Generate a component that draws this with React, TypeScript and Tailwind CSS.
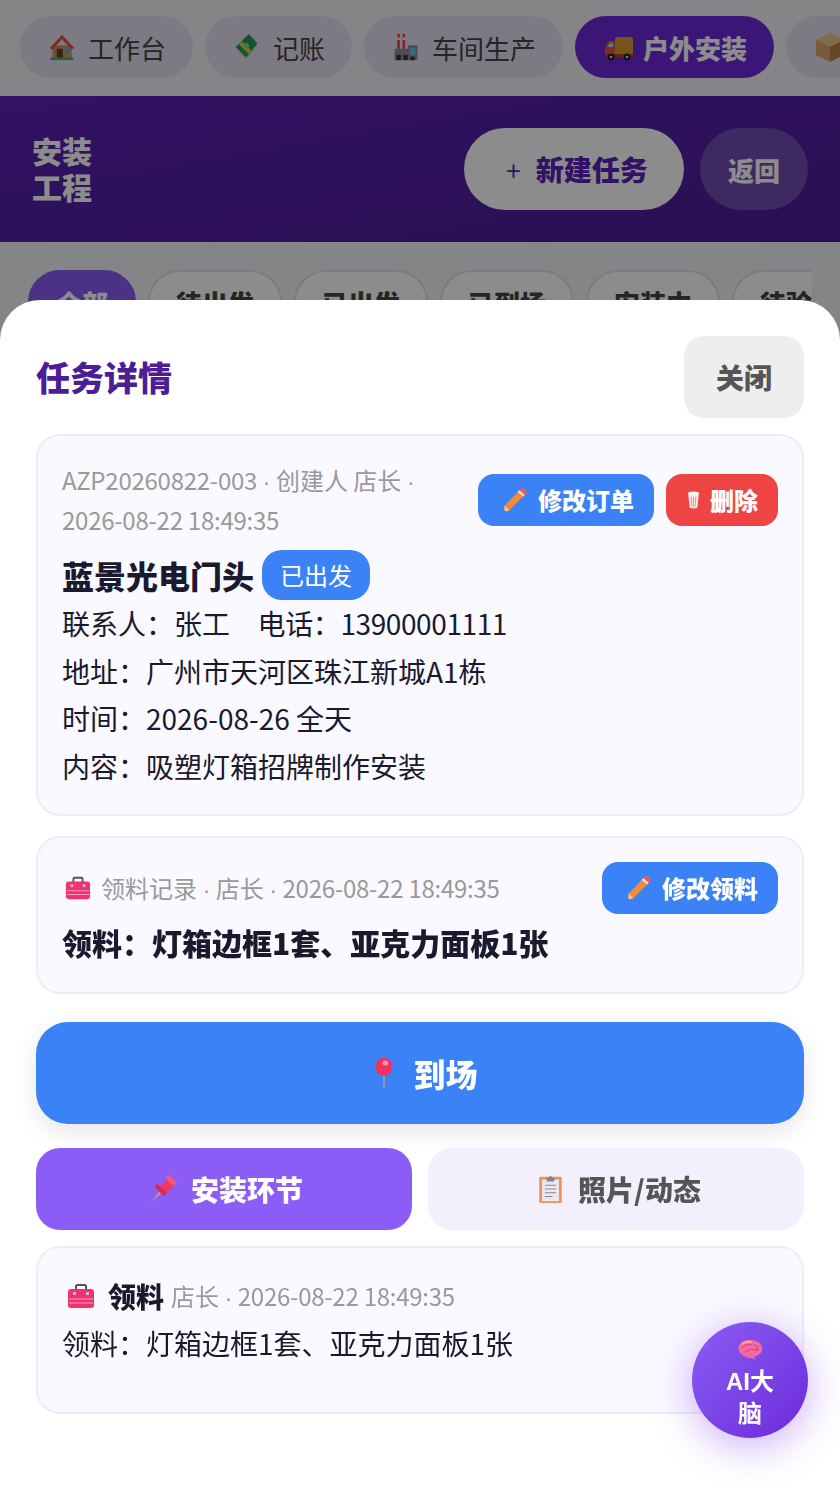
// App.tsx
import type { ReactNode } from "react";

function HouseIcon() {
  return (
    <svg viewBox="0 0 32 32" className="w-7 h-8">
      <rect x="5" y="14" width="22" height="15" fill="#c9976b" />
      <path d="M16 2 L30 17 L27 19 L16 7 L5 19 L2 17 Z" fill="#e2553d" />
      <rect x="10" y="18" width="7" height="11" fill="#6b3f2a" />
      <rect x="20" y="17" width="5" height="6" fill="#5bb0e0" />
      <rect x="3" y="28" width="26" height="3" fill="#4caf50" />
    </svg>
  );
}

function MoneyIcon() {
  return (
    <svg viewBox="0 0 32 32" className="w-7 h-8">
      <path d="M6 22 L16 31 L27 14 L17 4 Z" fill="#cfd3d6" />
      <path d="M3 16 L18 1 L28 12 L15 28 Z" fill="#1f9d4d" />
      <path d="M10 9 L21 20 L18 24 L7 13 Z" fill="#e9c64a" />
      <circle cx="15.500" cy="14.500" r="3" fill="#7bd88f" />
    </svg>
  );
}

function FactoryIcon() {
  return (
    <svg viewBox="0 0 32 32" className="w-7 h-8">
      <rect x="6" y="1" width="3" height="18" fill="#e5484d" />
      <rect x="12" y="1" width="3" height="18" fill="#e5484d" />
      <rect x="6" y="5" width="3" height="3" fill="#eee" />
      <rect x="12" y="5" width="3" height="3" fill="#eee" />
      <path d="M3 18 H18 V14 H29 V31 H3 Z" fill="#8a8a94" />
      <rect x="20" y="17" width="7" height="8" fill="#63c6e8" />
      <rect x="5" y="25" width="5" height="6" fill="#333" />
      <rect x="13" y="25" width="5" height="6" fill="#333" />
      <rect x="21" y="27" width="5" height="4" fill="#333" />
    </svg>
  );
}

function TruckIcon() {
  return (
    <svg viewBox="0 0 32 32" className="w-8 h-8">
      <rect x="12" y="6" width="18" height="18" rx="2" fill="#d99a2b" />
      <path d="M2 16 L6 10 H12 V24 H2 Z" fill="#e5533d" />
      <path d="M4 16 L7 12 H10 V16 Z" fill="#9fdcf5" />
      <rect x="2" y="23" width="28" height="3" fill="#b5402d" />
      <circle cx="8" cy="26" r="3.500" fill="#222" />
      <circle cx="24" cy="26" r="3.500" fill="#222" />
      <circle cx="8" cy="26" r="1.300" fill="#ddd" />
      <circle cx="24" cy="26" r="1.300" fill="#ddd" />
    </svg>
  );
}

function BoxIcon() {
  return (
    <svg viewBox="0 0 32 32" className="w-8 h-8">
      <path d="M16 2 L30 9 V24 L16 31 Z" fill="#b9824a" />
      <path d="M16 2 L2 9 V24 L16 31 Z" fill="#d8a46c" />
      <path d="M2 9 L16 16 L30 9 L16 2 Z" fill="#ecc28e" />
    </svg>
  );
}

function PencilIcon() {
  return (
    <svg viewBox="0 0 28 28" className="ml-1 w-[26px] h-[26px] shrink-0">
      <path d="M3 20 L18 4 L24 9 L8 25 L2 27 Z" fill="#f08a3c" />
      <path d="M18 4 L20.500 1.500 Q22 0.500 23.500 1.500 L26 4 Q27 5.500 26 7 L24 9 Z" fill="#ef5b4c" />
      <path d="M16.800 5.300 L18.600 3.400 L24.600 8.400 L22.800 10.200 Z" fill="#f3d9d9" />
      <path d="M3 20 L8 25 L2 27 Z" fill="#e9c49a" />
      <path d="M2.400 25 L4 26.500 L1.800 27.300 Z" fill="#7a4a8a" />
    </svg>
  );
}

function TrashIcon() {
  return (
    <svg viewBox="0 0 20 28" className="ml-px w-[13px] h-[22px] shrink-0">
      <ellipse cx="10" cy="4" rx="9" ry="3" fill="#fff" />
      <path d="M2 6 H18 L16 26 Q10 28 4 26 Z" fill="#fde5e5" />
      <path d="M6.500 9 L7.500 24 M10 9 V24 M13.500 9 L12.500 24" stroke="#ef8a8a" strokeWidth="1.300" />
    </svg>
  );
}

function ToolboxIcon({ size }: { size: string }) {
  return (
    <svg viewBox="0 0 28 28" className={size}>
      <path d="M9 8 V4.500 Q9 3 10.500 3 H17.500 Q19 3 19 4.500 V8" fill="none" stroke="#5b4a72" strokeWidth="2" />
      <rect x="1" y="7" width="26" height="19" rx="3" fill="#f0326e" />
      <rect x="6" y="10" width="3" height="3" fill="#c9b6d6" />
      <rect x="19" y="10" width="3" height="3" fill="#c9b6d6" />
      <path d="M2 17 H26 M2 21 H26" stroke="#f7a0bd" strokeWidth="1.200" />
    </svg>
  );
}

function RoundPin() {
  return (
    <svg viewBox="0 0 24 36" className="ml-3 w-5 h-[31px] shrink-0">
      <rect x="11" y="16" width="2" height="19" fill="#a0a0aa" />
      <ellipse cx="12" cy="10" rx="10" ry="11" fill="#f2315f" />
      <ellipse cx="13.500" cy="5.500" rx="3.500" ry="3" fill="#ff9eb5" />
    </svg>
  );
}

function PushPin() {
  return (
    <svg viewBox="0 0 30 30" className="ml-[5px] w-7 h-7 shrink-0">
      <path d="M1 29 L11 17 L13 19 Z" fill="#a5a5a0" />
      <path d="M8 14 L20 4 L26 10 L16 22 Z" fill="#ee3a5f" />
      <rect x="16.500" y="3.500" width="13" height="5" rx="2" transform="rotate(45 23 6)" fill="#f7587a" />
      <rect x="4" y="14" width="15" height="4.500" rx="2" transform="rotate(45 11.500 16)" fill="#d62a52" />
    </svg>
  );
}

function ClipboardIcon() {
  return (
    <svg viewBox="0 0 26 32" className="ml-[7px] w-[25px] h-[30px] shrink-0">
      <rect x="1" y="3" width="24" height="28" rx="1.500" fill="#e8965a" />
      <rect x="4" y="6" width="18" height="23" fill="#ece8f2" />
      <path d="M7 12 H19 M7 16 H19 M7 20 H19 M7 24 H15" stroke="#8a8790" strokeWidth="1.200" />
      <path d="M9 8 V4 H11 Q13 0 15 4 H17 V8 Z" fill="#85828c" />
    </svg>
  );
}

function BrainIcon() {
  return (
    <svg viewBox="0 0 26 22" className="w-[26px] h-[22px]">
      <path d="M3 14 Q-1 8 4 4 Q8 0 14 1 Q22 1 25 8 Q26 14 21 16 Q19 18 17 17 L18 21 L15 19 Q9 20 3 14 Z" fill="#f06ba0" />
      <path d="M5 8 Q10 4 15 6 M8 13 Q13 9 20 11 M17 5 Q21 7 21 12" fill="none" stroke="#d63f82" strokeWidth="1" />
      <path d="M5 5 Q10 2 15 3" fill="none" stroke="#f9a78e" strokeWidth="2" />
    </svg>
  );
}

// the middle dot in the reference is the narrow latin one
function Dot() {
  return <span className="leading-none font-['Liberation_Sans',sans-serif]">·</span>;
}

function Stamp({ children }: { children: ReactNode }) {
  return <span className="tracking-[-0.25px]">{children}</span>;
}

const navItems: { icon: ReactNode; label: string; active?: boolean }[] = [
  { icon: <HouseIcon />, label: "工作台" },
  { icon: <MoneyIcon />, label: "记账" },
  { icon: <FactoryIcon />, label: "车间生产" },
  { icon: <TruckIcon />, label: "户外安装", active: true },
  { icon: <BoxIcon />, label: "仓库管理" },
];

const filters = ["全部", "待出发", "已出发", "已到场", "安装中", "待验收"];

function SmallButton({ color, children }: { color: string; children: ReactNode }) {
  return (
    <button className={`h-[52px] shrink-0 rounded-2xl px-5 flex items-center gap-2.5 text-2xl font-black text-white ${color}`}>
      {children}
    </button>
  );
}

export default function App() {
  return (
    <div className="relative h-[1494px] w-[840px] overflow-hidden bg-[#f3f2f6] font-['Noto_Sans_CJK_SC',sans-serif]">
      <nav className="h-[96px] pt-4 pl-5 flex gap-3 overflow-hidden">
        {navItems.map((item) => (
          <div
            key={item.label}
            className={`h-[62px] shrink-0 rounded-full pl-7 pr-[27px] flex items-center text-[26px] ${
              item.active ? "bg-[#6d28d9] text-white font-black" : "bg-[#e4dff0] text-[#444]"
            }`}
          >
            <span className="w-10 shrink-0">{item.icon}</span>
            {item.label}
          </div>
        ))}
      </nav>

      <header className="h-[146px] px-8 flex items-center justify-between bg-gradient-to-br from-[#5b21b6] to-[#4c1d95]">
        <h1 className="-mt-0.5 w-[60px] text-[30px] leading-9 font-black text-white">安装工程</h1>
        <div className="flex gap-4">
          <button className="h-[82px] w-[220px] rounded-full bg-white flex items-center justify-center gap-[15px] text-[#5b21b6] text-[28px] font-black">
            <span className="ml-1.5 font-normal text-[26px]">+</span>
            新建任务
          </button>
          <button className="h-[82px] w-[108px] rounded-full bg-white/20 text-white text-[26px] font-black">返回</button>
        </div>
      </header>

      <div className="mt-7 ml-7 w-[784px] flex gap-3 overflow-hidden">
        {filters.map((f, i) => (
          <div
            key={f}
            className={`h-16 shrink-0 rounded-full px-[26px] border-2 flex items-center text-[26px] font-black ${
              i === 0 ? "bg-[#8b5cf6] border-[#8b5cf6] text-white" : "bg-white border-[#e2def0] text-[#444]"
            }`}
          >
            {f}
          </div>
        ))}
      </div>

      {/* modal */}
      <div className="fixed inset-0 bg-black/45 flex items-end">
        <div className="w-full h-[1194px] rounded-t-[40px] bg-white px-9 pt-9 flex flex-col">
          <div className="flex items-center justify-between mb-4">
            <h2 className="-mt-0.5 text-[34px] font-black text-[#4c1d95]">任务详情</h2>
            <button className="h-[82px] w-[120px] rounded-[20px] bg-[#eeeeee] text-[28px] font-black text-[#555]">关闭</button>
          </div>

          <section className="rounded-3xl border-2 border-[#eeecf8] bg-[#faf9ff] p-6">
            <div className="flex items-center justify-between gap-3">
              <p className="flex-1 min-w-0 text-2xl leading-10 text-[#999]">
                <Stamp>AZP20260822-003</Stamp> <Dot /> 创建人 店长 <Dot /> <Stamp>2026-08-22 18:49:35</Stamp>
              </p>
              <div className="flex gap-3">
                <SmallButton color="bg-[#3b82f6]">
                  <PencilIcon />
                  修改订单
                </SmallButton>
                <SmallButton color="bg-[#ef4444]">
                  <TrashIcon />
                  删除
                </SmallButton>
              </div>
            </div>
            <div className="mt-2.5 flex items-center gap-2 h-[50px]">
              <span className="text-[32px] font-black text-[#1a1a2e]">蓝景光电门头</span>
              <span className="h-[50px] px-[18px] rounded-[20px] bg-[#3b82f6] text-2xl leading-[50px] text-white">已出发</span>
            </div>
            <div className="text-[28px] leading-[1.7] text-[#1a1a2e]">
              <p>
                联系人：张工<span className="tracking-[-0.4px]">　电话：13900001111</span>
              </p>
              <p>地址：广州市天河区珠江新城A1栋</p>
              <p>时间：2026-08-26 全天</p>
              <p>内容：吸塑灯箱招牌制作安装</p>
            </div>
          </section>

          <section className="mt-5 rounded-3xl border-2 border-[#eeecf8] bg-[#faf9ff] p-6">
            <div className="flex items-center justify-between">
              <p className="flex items-center text-2xl text-[#999]">
                <ToolboxIcon size="ml-[3px] mr-2.5 w-[26px] h-[26px] shrink-0" />
                <span>
                  领料记录 <Dot /> 店长 <Dot /> <Stamp>2026-08-22 18:49:35</Stamp>
                </span>
              </p>
              <SmallButton color="bg-[#3b82f6]">
                <PencilIcon />
                修改领料
              </SmallButton>
            </div>
            <p className="mt-1 mb-0.5 text-[30px] leading-[48px] font-black text-[#1a1a2e]">领料：灯箱边框1套、亚克力面板1张</p>
          </section>

          <button className="mt-7 h-[102px] shrink-0 rounded-[32px] bg-[#3b82f6] flex items-center justify-center gap-[19px] text-[32px] font-black text-white shadow-[0_8px_24px_rgba(0,0,0,0.1)]">
            <RoundPin />
            到场
          </button>

          <div className="mt-6 grid grid-cols-2 gap-4">
            <button className="h-[82px] rounded-3xl bg-[#8b5cf6] flex items-center justify-center gap-[13px] text-[28px] font-black text-white">
              <PushPin />
              安装环节
            </button>
            <button className="h-[82px] rounded-3xl bg-[#f3effc] flex items-center justify-center gap-[15px] text-[28px] font-black text-[#555]">
              <ClipboardIcon />
              照片/动态
            </button>
          </div>

          <section className="mt-4 h-[168px] rounded-3xl border-2 border-[#eeecf8] bg-[#faf9ff] p-6">
            <div className="flex items-center h-12">
              <ToolboxIcon size="ml-[5px] mr-[13px] w-7 h-7 shrink-0" />
              <span className="mr-[7px] text-[28px] font-black text-[#1a1a2e]">领料</span>
              <span className="text-2xl text-[#999]">
                店长 <Dot /> <Stamp>2026-08-22 18:49:35</Stamp>
              </span>
            </div>
            <p className="text-[28px] leading-[1.7] text-[#1a1a2e]">领料：灯箱边框1套、亚克力面板1张</p>
          </section>
        </div>
      </div>

      <button className="fixed left-[692px] top-[1322px] pt-1 w-[116px] h-[116px] rounded-full bg-gradient-to-br from-[#8b5cf6] to-[#6d28d9] shadow-[0_8px_40px_rgba(124,58,237,0.4)] flex flex-col items-center justify-center text-2xl leading-8 font-bold text-white">
        <span className="h-8 flex items-center">
          <BrainIcon />
        </span>
        <span className="w-[60px] font-['Liberation_Sans','Noto_Sans_CJK_SC',sans-serif]">AI大脑</span>
      </button>
    </div>
  );
}
